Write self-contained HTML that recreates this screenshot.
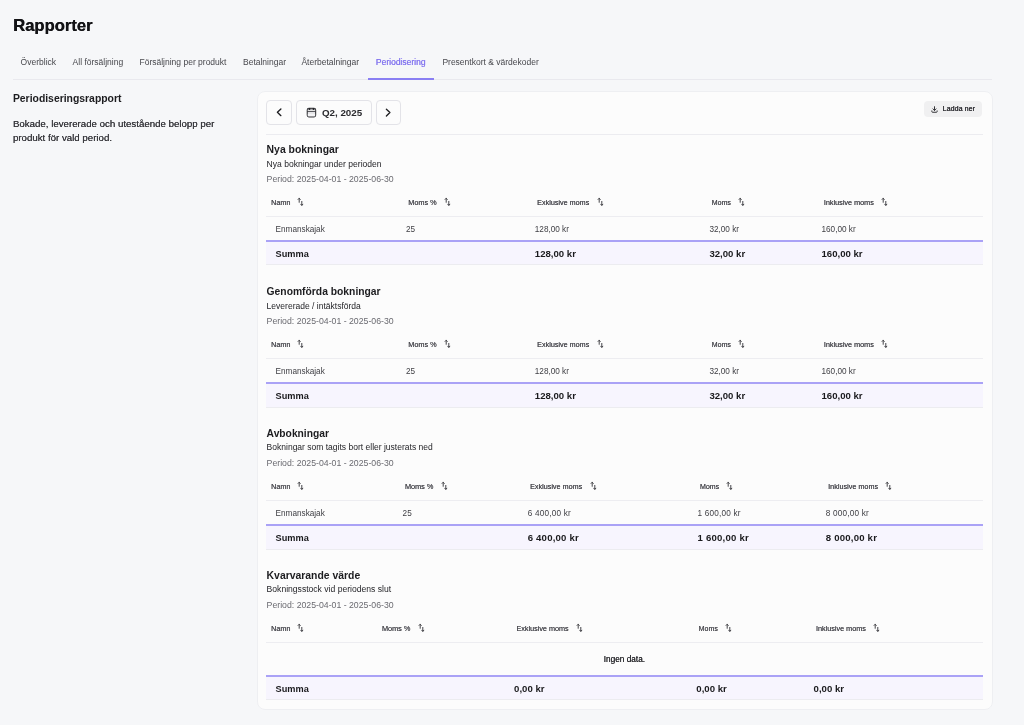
<!DOCTYPE html>
<html><head><meta charset="utf-8"><style>
html,body{margin:0;padding:0;}
body{width:1024px;height:725px;overflow:hidden;background:#f6f7f9;position:relative;font-family:"Liberation Sans",sans-serif;}
.t{position:absolute;white-space:nowrap;line-height:1;}
.r{position:absolute;}
svg{display:block;}
</style></head><body>
<div id="wrap" style="position:absolute;left:0;top:0;width:1024px;height:725px;will-change:transform;">
<div class="t" style="left:13.10px;top:18px;font-size:16.6px;font-weight:700;color:#131316;text-shadow:0.3px 0 0 #131316;">Rapporter</div>
<div class="t" style="left:20.60px;top:58px;font-size:8.5px;color:#47474c;">Överblick</div>
<div class="t" style="left:72.60px;top:58px;font-size:8.5px;color:#47474c;">All försäljning</div>
<div class="t" style="left:139.50px;top:58px;font-size:8.5px;color:#47474c;">Försäljning per produkt</div>
<div class="t" style="left:243.00px;top:58px;font-size:8.5px;color:#47474c;">Betalningar</div>
<div class="t" style="left:301.40px;top:58px;font-size:8.5px;color:#47474c;">Återbetalningar</div>
<div class="t" style="left:375.80px;top:58px;font-size:8.5px;color:#8577ef;text-shadow:0.3px 0 0 #8577ef;">Periodisering</div>
<div class="t" style="left:442.40px;top:58px;font-size:8.5px;color:#47474c;">Presentkort &amp; värdekoder</div>
<div class="r" style="left:12.5px;top:79px;width:979.5px;height:1px;background:#e9e9ee;"></div>
<div class="r" style="left:368px;top:78px;width:66px;height:2px;background:#8a7ff3;"></div>
<div class="t" style="left:12.90px;top:94px;font-size:10.4px;font-weight:700;color:#1c1c1f;">Periodiseringsrapport</div>
<div class="t" style="left:12.90px;top:119px;font-size:9.7px;color:#38383d;text-shadow:0.1px 0 0 #38383d;">Bokade, levererade och utestående belopp per</div>
<div class="t" style="left:12.90px;top:133px;font-size:9.7px;color:#38383d;text-shadow:0.1px 0 0 #38383d;">produkt för vald period.</div>
<div class="r" style="left:257px;top:91px;width:734px;height:617px;background:#fcfcfc;border:1px solid #eeeff2;border-radius:8px;"></div>
<div class="r" style="left:266px;top:100px;width:26px;height:25px;background:#fcfcfc;border:1px solid #e3e3e8;border-radius:4px;box-sizing:border-box;"></div>
<div class="r" style="left:296px;top:100px;width:76px;height:25px;background:#fcfcfc;border:1px solid #e3e3e8;border-radius:4px;box-sizing:border-box;"></div>
<div class="r" style="left:376px;top:100px;width:25px;height:25px;background:#fcfcfc;border:1px solid #e3e3e8;border-radius:4px;box-sizing:border-box;"></div>
<svg class="r" style="left:274px;top:107px" width="10" height="11" viewBox="0 0 10 11"><path d="M6.9 1.95L3.4 5.3L6.9 8.65" stroke="#1f1f22" stroke-width="1.35" fill="none" stroke-linecap="round" stroke-linejoin="round"/></svg>
<svg class="r" style="left:383px;top:107px" width="10" height="11" viewBox="0 0 10 11"><path d="M3.4 2.25L6.9 5.6L3.4 8.95" stroke="#1f1f22" stroke-width="1.35" fill="none" stroke-linecap="round" stroke-linejoin="round"/></svg>
<svg class="r" style="left:306px;top:107px" width="11" height="11" viewBox="0 0 11 11"><rect x="1.25" y="1.35" width="8.4" height="8.5" rx="1.6" stroke="#37373b" stroke-width="1.1" fill="#e4e4e7"/><rect x="1.8" y="1.6" width="7.3" height="1.0" fill="#707074"/><rect x="1.8" y="2.8" width="7.3" height="1.1" fill="#f7f7f8"/><rect x="1.8" y="6.8" width="7.3" height="2.5" fill="#f3f3f5"/><path d="M1.25 4.4H9.65" stroke="#37373b" stroke-width="0.9"/><circle cx="3.5" cy="2.0" r="0.9" fill="#1f1f22"/><circle cx="7.5" cy="2.0" r="0.9" fill="#1f1f22"/></svg>
<div class="t" style="left:321.90px;top:108px;font-size:9.8px;font-weight:700;color:#2a2a2e;">Q2, 2025</div>
<div class="r" style="left:924px;top:101px;width:58px;height:16px;background:#f0f0f1;border-radius:4px;"></div>
<svg class="r" style="left:930px;top:105px" width="9" height="9" viewBox="0 0 9 9"><path d="M4.5 1.7V5.4M3 3.9L4.5 5.4L6 3.9M1.85 5.9V6.6Q1.85 7.25 2.5 7.25H6.5Q7.15 7.25 7.15 6.6V5.9" stroke="#333337" stroke-width="1" fill="none" stroke-linecap="round" stroke-linejoin="round"/></svg>
<div class="t" style="left:942.60px;top:105px;font-size:7.2px;color:#2a2a2f;text-shadow:0.15px 0 0 #2a2a2f;">Ladda ner</div>
<div class="r" style="left:266px;top:134px;width:717px;height:1px;background:#ececf0;"></div>
<div class="t" style="left:266.60px;top:145px;font-size:10.41px;font-weight:700;color:#1c1c1f;">Nya bokningar</div>
<div class="t" style="left:266.60px;top:160px;font-size:8.55px;color:#242428;">Nya bokningar under perioden</div>
<div class="t" style="left:266.60px;top:175px;font-size:8.72px;color:#6a6a70;">Period: 2025-04-01 - 2025-06-30</div>
<div class="t" style="left:271.10px;top:199px;font-size:7.2px;color:#4c4c52;text-shadow:0.15px 0 0 #4c4c52;">Namn</div>
<div class="r" style="left:296.8px;top:197px"><svg width="7" height="9" viewBox="0 0 7 9"><path d="M2.2 1.3V5.3M1.1 2.4L2.2 1.3L3.3 2.4M4.8 4.4V8.3M3.7 7.2L4.8 8.3L5.9 7.2" stroke="#3a3a3f" stroke-width="0.95" fill="none" stroke-linecap="round" stroke-linejoin="round"/></svg></div>
<div class="t" style="left:408.20px;top:199px;font-size:7.3px;color:#4c4c52;text-shadow:0.15px 0 0 #4c4c52;">Moms %</div>
<div class="r" style="left:443.9px;top:197px"><svg width="7" height="9" viewBox="0 0 7 9"><path d="M2.2 1.3V5.3M1.1 2.4L2.2 1.3L3.3 2.4M4.8 4.4V8.3M3.7 7.2L4.8 8.3L5.9 7.2" stroke="#3a3a3f" stroke-width="0.95" fill="none" stroke-linecap="round" stroke-linejoin="round"/></svg></div>
<div class="t" style="left:537.10px;top:199px;font-size:7.23px;color:#4c4c52;text-shadow:0.15px 0 0 #4c4c52;">Exklusive moms</div>
<div class="r" style="left:596.6px;top:197px"><svg width="7" height="9" viewBox="0 0 7 9"><path d="M2.2 1.3V5.3M1.1 2.4L2.2 1.3L3.3 2.4M4.8 4.4V8.3M3.7 7.2L4.8 8.3L5.9 7.2" stroke="#3a3a3f" stroke-width="0.95" fill="none" stroke-linecap="round" stroke-linejoin="round"/></svg></div>
<div class="t" style="left:711.70px;top:199px;font-size:7.05px;color:#4c4c52;text-shadow:0.15px 0 0 #4c4c52;">Moms</div>
<div class="r" style="left:738.2px;top:197px"><svg width="7" height="9" viewBox="0 0 7 9"><path d="M2.2 1.3V5.3M1.1 2.4L2.2 1.3L3.3 2.4M4.8 4.4V8.3M3.7 7.2L4.8 8.3L5.9 7.2" stroke="#3a3a3f" stroke-width="0.95" fill="none" stroke-linecap="round" stroke-linejoin="round"/></svg></div>
<div class="t" style="left:823.80px;top:199px;font-size:7.26px;color:#4c4c52;text-shadow:0.15px 0 0 #4c4c52;">Inklusive moms</div>
<div class="r" style="left:881.1px;top:197px"><svg width="7" height="9" viewBox="0 0 7 9"><path d="M2.2 1.3V5.3M1.1 2.4L2.2 1.3L3.3 2.4M4.8 4.4V8.3M3.7 7.2L4.8 8.3L5.9 7.2" stroke="#3a3a3f" stroke-width="0.95" fill="none" stroke-linecap="round" stroke-linejoin="round"/></svg></div>
<div class="r" style="left:266px;top:216px;width:717px;height:1px;background:#ededf1;"></div>
<div class="t" style="left:275.60px;top:226px;font-size:8.2px;color:#3e3e43;">Enmanskajak</div>
<div class="t" style="left:405.90px;top:226px;font-size:8.2px;color:#3e3e43;">25</div>
<div class="t" style="left:534.80px;top:226px;font-size:8.2px;color:#3e3e43;">128,00 kr</div>
<div class="t" style="left:709.40px;top:226px;font-size:8.2px;color:#3e3e43;">32,00 kr</div>
<div class="t" style="left:821.50px;top:226px;font-size:8.2px;color:#3e3e43;">160,00 kr</div>
<div class="r" style="left:266px;top:240px;width:717px;height:2px;background:#aaa2f6;"></div>
<div class="r" style="left:266px;top:242px;width:717px;height:22px;background:#f7f5fe;"></div>
<div class="r" style="left:266px;top:264px;width:717px;height:1px;background:#ececf0;"></div>
<div class="t" style="left:275.60px;top:250px;font-size:9.2px;font-weight:700;color:#1a1a1d;">Summa</div>
<div class="t" style="left:534.80px;top:249px;font-size:9.6px;font-weight:700;color:#1a1a1d;">128,00 kr</div>
<div class="t" style="left:709.40px;top:249px;font-size:9.6px;font-weight:700;color:#1a1a1d;">32,00 kr</div>
<div class="t" style="left:821.50px;top:249px;font-size:9.6px;font-weight:700;color:#1a1a1d;">160,00 kr</div>
<div class="t" style="left:266.60px;top:287px;font-size:10.32px;font-weight:700;color:#1c1c1f;">Genomförda bokningar</div>
<div class="t" style="left:266.60px;top:302px;font-size:8.53px;color:#242428;">Levererade / intäktsförda</div>
<div class="t" style="left:266.60px;top:317px;font-size:8.72px;color:#6a6a70;">Period: 2025-04-01 - 2025-06-30</div>
<div class="t" style="left:271.10px;top:341px;font-size:7.2px;color:#4c4c52;text-shadow:0.15px 0 0 #4c4c52;">Namn</div>
<div class="r" style="left:296.8px;top:339px"><svg width="7" height="9" viewBox="0 0 7 9"><path d="M2.2 1.3V5.3M1.1 2.4L2.2 1.3L3.3 2.4M4.8 4.4V8.3M3.7 7.2L4.8 8.3L5.9 7.2" stroke="#3a3a3f" stroke-width="0.95" fill="none" stroke-linecap="round" stroke-linejoin="round"/></svg></div>
<div class="t" style="left:408.20px;top:341px;font-size:7.3px;color:#4c4c52;text-shadow:0.15px 0 0 #4c4c52;">Moms %</div>
<div class="r" style="left:443.9px;top:339px"><svg width="7" height="9" viewBox="0 0 7 9"><path d="M2.2 1.3V5.3M1.1 2.4L2.2 1.3L3.3 2.4M4.8 4.4V8.3M3.7 7.2L4.8 8.3L5.9 7.2" stroke="#3a3a3f" stroke-width="0.95" fill="none" stroke-linecap="round" stroke-linejoin="round"/></svg></div>
<div class="t" style="left:537.10px;top:341px;font-size:7.23px;color:#4c4c52;text-shadow:0.15px 0 0 #4c4c52;">Exklusive moms</div>
<div class="r" style="left:596.6px;top:339px"><svg width="7" height="9" viewBox="0 0 7 9"><path d="M2.2 1.3V5.3M1.1 2.4L2.2 1.3L3.3 2.4M4.8 4.4V8.3M3.7 7.2L4.8 8.3L5.9 7.2" stroke="#3a3a3f" stroke-width="0.95" fill="none" stroke-linecap="round" stroke-linejoin="round"/></svg></div>
<div class="t" style="left:711.70px;top:341px;font-size:7.05px;color:#4c4c52;text-shadow:0.15px 0 0 #4c4c52;">Moms</div>
<div class="r" style="left:738.2px;top:339px"><svg width="7" height="9" viewBox="0 0 7 9"><path d="M2.2 1.3V5.3M1.1 2.4L2.2 1.3L3.3 2.4M4.8 4.4V8.3M3.7 7.2L4.8 8.3L5.9 7.2" stroke="#3a3a3f" stroke-width="0.95" fill="none" stroke-linecap="round" stroke-linejoin="round"/></svg></div>
<div class="t" style="left:823.80px;top:341px;font-size:7.26px;color:#4c4c52;text-shadow:0.15px 0 0 #4c4c52;">Inklusive moms</div>
<div class="r" style="left:881.1px;top:339px"><svg width="7" height="9" viewBox="0 0 7 9"><path d="M2.2 1.3V5.3M1.1 2.4L2.2 1.3L3.3 2.4M4.8 4.4V8.3M3.7 7.2L4.8 8.3L5.9 7.2" stroke="#3a3a3f" stroke-width="0.95" fill="none" stroke-linecap="round" stroke-linejoin="round"/></svg></div>
<div class="r" style="left:266px;top:358px;width:717px;height:1px;background:#ededf1;"></div>
<div class="t" style="left:275.60px;top:368px;font-size:8.2px;color:#3e3e43;">Enmanskajak</div>
<div class="t" style="left:405.90px;top:368px;font-size:8.2px;color:#3e3e43;">25</div>
<div class="t" style="left:534.80px;top:368px;font-size:8.2px;color:#3e3e43;">128,00 kr</div>
<div class="t" style="left:709.40px;top:368px;font-size:8.2px;color:#3e3e43;">32,00 kr</div>
<div class="t" style="left:821.50px;top:368px;font-size:8.2px;color:#3e3e43;">160,00 kr</div>
<div class="r" style="left:266px;top:382px;width:717px;height:2px;background:#aaa2f6;"></div>
<div class="r" style="left:266px;top:384px;width:717px;height:23px;background:#f7f5fe;"></div>
<div class="r" style="left:266px;top:407px;width:717px;height:1px;background:#ececf0;"></div>
<div class="t" style="left:275.60px;top:392px;font-size:9.2px;font-weight:700;color:#1a1a1d;">Summa</div>
<div class="t" style="left:534.80px;top:391px;font-size:9.6px;font-weight:700;color:#1a1a1d;">128,00 kr</div>
<div class="t" style="left:709.40px;top:391px;font-size:9.6px;font-weight:700;color:#1a1a1d;">32,00 kr</div>
<div class="t" style="left:821.50px;top:391px;font-size:9.6px;font-weight:700;color:#1a1a1d;">160,00 kr</div>
<div class="t" style="left:266.60px;top:429px;font-size:10.27px;font-weight:700;color:#1c1c1f;">Avbokningar</div>
<div class="t" style="left:266.60px;top:443px;font-size:8.52px;color:#242428;">Bokningar som tagits bort eller justerats ned</div>
<div class="t" style="left:266.60px;top:459px;font-size:8.72px;color:#6a6a70;">Period: 2025-04-01 - 2025-06-30</div>
<div class="t" style="left:271.10px;top:483px;font-size:7.2px;color:#4c4c52;text-shadow:0.15px 0 0 #4c4c52;">Namn</div>
<div class="r" style="left:296.8px;top:481px"><svg width="7" height="9" viewBox="0 0 7 9"><path d="M2.2 1.3V5.3M1.1 2.4L2.2 1.3L3.3 2.4M4.8 4.4V8.3M3.7 7.2L4.8 8.3L5.9 7.2" stroke="#3a3a3f" stroke-width="0.95" fill="none" stroke-linecap="round" stroke-linejoin="round"/></svg></div>
<div class="t" style="left:404.90px;top:483px;font-size:7.3px;color:#4c4c52;text-shadow:0.15px 0 0 #4c4c52;">Moms %</div>
<div class="r" style="left:440.6px;top:481px"><svg width="7" height="9" viewBox="0 0 7 9"><path d="M2.2 1.3V5.3M1.1 2.4L2.2 1.3L3.3 2.4M4.8 4.4V8.3M3.7 7.2L4.8 8.3L5.9 7.2" stroke="#3a3a3f" stroke-width="0.95" fill="none" stroke-linecap="round" stroke-linejoin="round"/></svg></div>
<div class="t" style="left:530.00px;top:483px;font-size:7.23px;color:#4c4c52;text-shadow:0.15px 0 0 #4c4c52;">Exklusive moms</div>
<div class="r" style="left:589.5px;top:481px"><svg width="7" height="9" viewBox="0 0 7 9"><path d="M2.2 1.3V5.3M1.1 2.4L2.2 1.3L3.3 2.4M4.8 4.4V8.3M3.7 7.2L4.8 8.3L5.9 7.2" stroke="#3a3a3f" stroke-width="0.95" fill="none" stroke-linecap="round" stroke-linejoin="round"/></svg></div>
<div class="t" style="left:699.90px;top:483px;font-size:7.05px;color:#4c4c52;text-shadow:0.15px 0 0 #4c4c52;">Moms</div>
<div class="r" style="left:726.4px;top:481px"><svg width="7" height="9" viewBox="0 0 7 9"><path d="M2.2 1.3V5.3M1.1 2.4L2.2 1.3L3.3 2.4M4.8 4.4V8.3M3.7 7.2L4.8 8.3L5.9 7.2" stroke="#3a3a3f" stroke-width="0.95" fill="none" stroke-linecap="round" stroke-linejoin="round"/></svg></div>
<div class="t" style="left:828.10px;top:483px;font-size:7.26px;color:#4c4c52;text-shadow:0.15px 0 0 #4c4c52;">Inklusive moms</div>
<div class="r" style="left:885.4px;top:481px"><svg width="7" height="9" viewBox="0 0 7 9"><path d="M2.2 1.3V5.3M1.1 2.4L2.2 1.3L3.3 2.4M4.8 4.4V8.3M3.7 7.2L4.8 8.3L5.9 7.2" stroke="#3a3a3f" stroke-width="0.95" fill="none" stroke-linecap="round" stroke-linejoin="round"/></svg></div>
<div class="r" style="left:266px;top:500px;width:717px;height:1px;background:#ededf1;"></div>
<div class="t" style="left:275.60px;top:510px;font-size:8.2px;color:#3e3e43;">Enmanskajak</div>
<div class="t" style="left:402.60px;top:510px;font-size:8.2px;color:#3e3e43;">25</div>
<div class="t" style="left:527.70px;top:510px;font-size:8.2px;color:#3e3e43;letter-spacing:0.2px;">6&nbsp;400,00 kr</div>
<div class="t" style="left:697.60px;top:510px;font-size:8.2px;color:#3e3e43;letter-spacing:0.2px;">1&nbsp;600,00 kr</div>
<div class="t" style="left:825.80px;top:510px;font-size:8.2px;color:#3e3e43;letter-spacing:0.2px;">8&nbsp;000,00 kr</div>
<div class="r" style="left:266px;top:524px;width:717px;height:2px;background:#aaa2f6;"></div>
<div class="r" style="left:266px;top:526px;width:717px;height:23px;background:#f7f5fe;"></div>
<div class="r" style="left:266px;top:549px;width:717px;height:1px;background:#ececf0;"></div>
<div class="t" style="left:275.60px;top:534px;font-size:9.2px;font-weight:700;color:#1a1a1d;">Summa</div>
<div class="t" style="left:527.70px;top:533px;font-size:9.6px;font-weight:700;color:#1a1a1d;letter-spacing:0.2px;">6&nbsp;400,00 kr</div>
<div class="t" style="left:697.60px;top:533px;font-size:9.6px;font-weight:700;color:#1a1a1d;letter-spacing:0.2px;">1&nbsp;600,00 kr</div>
<div class="t" style="left:825.80px;top:533px;font-size:9.6px;font-weight:700;color:#1a1a1d;letter-spacing:0.2px;">8&nbsp;000,00 kr</div>
<div class="t" style="left:266.60px;top:571px;font-size:10.4px;font-weight:700;color:#1c1c1f;">Kvarvarande värde</div>
<div class="t" style="left:266.60px;top:585px;font-size:8.59px;color:#242428;">Bokningsstock vid periodens slut</div>
<div class="t" style="left:266.60px;top:601px;font-size:8.72px;color:#6a6a70;">Period: 2025-04-01 - 2025-06-30</div>
<div class="t" style="left:271.10px;top:625px;font-size:7.2px;color:#4c4c52;text-shadow:0.15px 0 0 #4c4c52;">Namn</div>
<div class="r" style="left:296.8px;top:623px"><svg width="7" height="9" viewBox="0 0 7 9"><path d="M2.2 1.3V5.3M1.1 2.4L2.2 1.3L3.3 2.4M4.8 4.4V8.3M3.7 7.2L4.8 8.3L5.9 7.2" stroke="#3a3a3f" stroke-width="0.95" fill="none" stroke-linecap="round" stroke-linejoin="round"/></svg></div>
<div class="t" style="left:381.90px;top:625px;font-size:7.3px;color:#4c4c52;text-shadow:0.15px 0 0 #4c4c52;">Moms %</div>
<div class="r" style="left:417.6px;top:623px"><svg width="7" height="9" viewBox="0 0 7 9"><path d="M2.2 1.3V5.3M1.1 2.4L2.2 1.3L3.3 2.4M4.8 4.4V8.3M3.7 7.2L4.8 8.3L5.9 7.2" stroke="#3a3a3f" stroke-width="0.95" fill="none" stroke-linecap="round" stroke-linejoin="round"/></svg></div>
<div class="t" style="left:516.40px;top:625px;font-size:7.23px;color:#4c4c52;text-shadow:0.15px 0 0 #4c4c52;">Exklusive moms</div>
<div class="r" style="left:575.9px;top:623px"><svg width="7" height="9" viewBox="0 0 7 9"><path d="M2.2 1.3V5.3M1.1 2.4L2.2 1.3L3.3 2.4M4.8 4.4V8.3M3.7 7.2L4.8 8.3L5.9 7.2" stroke="#3a3a3f" stroke-width="0.95" fill="none" stroke-linecap="round" stroke-linejoin="round"/></svg></div>
<div class="t" style="left:698.60px;top:625px;font-size:7.05px;color:#4c4c52;text-shadow:0.15px 0 0 #4c4c52;">Moms</div>
<div class="r" style="left:725.1px;top:623px"><svg width="7" height="9" viewBox="0 0 7 9"><path d="M2.2 1.3V5.3M1.1 2.4L2.2 1.3L3.3 2.4M4.8 4.4V8.3M3.7 7.2L4.8 8.3L5.9 7.2" stroke="#3a3a3f" stroke-width="0.95" fill="none" stroke-linecap="round" stroke-linejoin="round"/></svg></div>
<div class="t" style="left:815.90px;top:625px;font-size:7.26px;color:#4c4c52;text-shadow:0.15px 0 0 #4c4c52;">Inklusive moms</div>
<div class="r" style="left:873.2px;top:623px"><svg width="7" height="9" viewBox="0 0 7 9"><path d="M2.2 1.3V5.3M1.1 2.4L2.2 1.3L3.3 2.4M4.8 4.4V8.3M3.7 7.2L4.8 8.3L5.9 7.2" stroke="#3a3a3f" stroke-width="0.95" fill="none" stroke-linecap="round" stroke-linejoin="round"/></svg></div>
<div class="r" style="left:266px;top:642px;width:717px;height:1px;background:#ededf1;"></div>
<div class="t" style="left:603.70px;top:656px;font-size:8.27px;color:#2a2a2e;text-shadow:0.1px 0 0 #2a2a2e;">Ingen data.</div>
<div class="r" style="left:266px;top:675px;width:717px;height:2px;background:#aaa2f6;"></div>
<div class="r" style="left:266px;top:677px;width:717px;height:22px;background:#f7f5fe;"></div>
<div class="r" style="left:266px;top:699px;width:717px;height:1px;background:#ececf0;"></div>
<div class="t" style="left:275.60px;top:685px;font-size:9.2px;font-weight:700;color:#1a1a1d;">Summa</div>
<div class="t" style="left:514.10px;top:684px;font-size:9.6px;font-weight:700;color:#1a1a1d;">0,00 kr</div>
<div class="t" style="left:696.30px;top:684px;font-size:9.6px;font-weight:700;color:#1a1a1d;">0,00 kr</div>
<div class="t" style="left:813.60px;top:684px;font-size:9.6px;font-weight:700;color:#1a1a1d;">0,00 kr</div>
</div></body></html>
